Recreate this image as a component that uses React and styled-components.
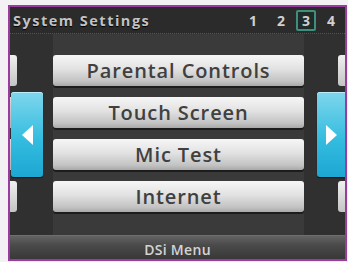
import React from "react";
import styled, { createGlobalStyle } from "styled-components";

const GlobalStyle = createGlobalStyle`
  body {
    margin: 0;
    background: #f3f1f4;
    font-family: "Open Sans", "DejaVu Sans", sans-serif;
  }
`;

const items = ["Parental Controls", "Touch Screen", "Mic Test", "Internet"];
const pages = [1, 2, 3, 4];

const App = () => {
  return (
    <>
      <GlobalStyle />
      <Frame>
        <Header>
          <Title>System Settings</Title>
          <Pages>
            {pages.map((p) => (
              <PageNum key={p} $active={p === 3}>
                {p}
              </PageNum>
            ))}
          </Pages>
        </Header>
        <Body>
          <Side $left>
            {items.map((i) => (
              <Stub key={i} $left />
            ))}
            <Arrow $left>
              <svg width="13" height="22" viewBox="0 0 13 22">
                <path d="M12 1 L1 11 L12 21 Z" fill="#ffffff" />
              </svg>
            </Arrow>
          </Side>
          <Menu>
            {items.map((i) => (
              <MenuButton key={i}>{i}</MenuButton>
            ))}
          </Menu>
          <Side>
            {items.map((i) => (
              <Stub key={i} />
            ))}
            <Arrow>
              <svg width="13" height="22" viewBox="0 0 13 22">
                <path d="M1 1 L12 11 L1 21 Z" fill="#ffffff" />
              </svg>
            </Arrow>
          </Side>
        </Body>
        <Footer>DSi Menu</Footer>
      </Frame>
    </>
  );
};

export default App;

// Styled Components
const Frame = styled.div`
  margin: 5px 0 0 8px;
  width: 339px;
  height: 256px;
  box-sizing: border-box;
  border: 2px solid #9a3c9f;
  background: #3a3a3a;
  display: flex;
  flex-direction: column;
  overflow: hidden;
`;

const Header = styled.div`
  height: 26px;
  flex: none;
  background: #2b2b2b;
  border-bottom: 1px dotted #555;
  display: flex;
  align-items: center;
  justify-content: space-between;
  padding: 0 4px 0 3px;
`;

const Title = styled.div`
  color: #c2c2c2;
  font-size: 14.5px;
  font-weight: 700;
  letter-spacing: 1.5px;
  text-shadow: 0 1px 1px #000;
`;

const Pages = styled.div`
  display: flex;
  align-items: center;
  gap: 8px;
`;

const PageNum = styled.span`
  color: #d0d0d0;
  font-size: 14px;
  font-weight: 700;
  line-height: 15px;
  padding: 1px 4px;
  border: 2px solid ${(p) => (p.$active ? "#3f8f7c" : "transparent")};
  border-radius: 2px;
  background: ${(p) => (p.$active ? "#1f2b28" : "transparent")};
  margin: ${(p) => (p.$active ? "0 -3px" : "0")};
`;

const Body = styled.div`
  flex: 1;
  display: grid;
  grid-template-columns: 43px 251px 41px;
`;

const Side = styled.div`
  position: relative;
  display: flex;
  flex-direction: column;
  align-items: ${(p) => (p.$left ? "flex-start" : "flex-end")};
  gap: 11px;
  padding-top: 21px;
  background: #303030;
`;

const Stub = styled.div`
  width: 7px;
  height: 31px;
  background: linear-gradient(#f0f0f0, #c4c4c4);
  border-radius: ${(p) => (p.$left ? "0 3px 3px 0" : "3px 0 0 3px")};
`;

const Arrow = styled.div`
  position: absolute;
  top: 58px;
  ${(p) => (p.$left ? "left: 1px;" : "right: 0;")}
  width: ${(p) => (p.$left ? "32px" : "28px")};
  height: 85px;
  border-radius: ${(p) => (p.$left ? "3px" : "3px 0 0 3px")};
  background: linear-gradient(#7fd6ec, #35bde0 55%, #1ca6d2);
  box-shadow: inset 0 1px 0 #b8ecf8, 0 1px 1px #111;
  display: flex;
  align-items: center;
  justify-content: center;
`;

const Menu = styled.div`
  display: flex;
  flex-direction: column;
  gap: 11px;
  padding-top: 21px;
`;

const MenuButton = styled.div`
  height: 31px;
  border-radius: 3px;
  background: linear-gradient(#f6f6f6, #e2e2e2 45%, #c2c2c2 85%, #a8a8a8);
  box-shadow: 0 2px 0 #1c1c1c;
  display: flex;
  align-items: center;
  justify-content: center;
  color: #404040;
  font-size: 20px;
  font-weight: 600;
  letter-spacing: 0.9px;
`;

const Footer = styled.div`
  height: 24px;
  flex: none;
  background: linear-gradient(#636363, #4a4a4a 40%, #383838);
  border-top: 1px solid #6e6e6e;
  box-sizing: border-box;
  display: flex;
  align-items: center;
  justify-content: center;
  padding-top: 3px;
  color: #d4d4d4;
  font-size: 14px;
  font-weight: 600;
  letter-spacing: 0.3px;
`;
